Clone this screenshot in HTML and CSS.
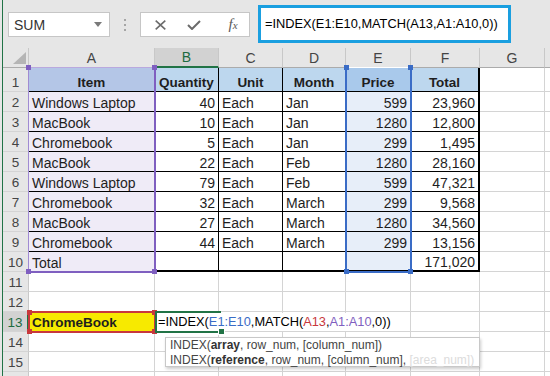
FILE: index.html
```html
<!DOCTYPE html>
<html lang="en">
<head>
  <meta charset="UTF-8">
  <title>INDEX MATCH</title>
  <link rel="stylesheet" href="styles.css">
</head>
<body>
<div class="window">
  <div class="toolbar">
    <div class="namebox"><span class="name">SUM</span><span class="caret"></span></div>
    <div class="grip"></div>
    <div class="fxbtns">
      <svg class="ico" width="11" height="10" viewBox="0 0 11 10"><path d="M0.7 0.6 L10.3 9.4 M10.3 0.6 L0.7 9.4" stroke="#6b6b6b" stroke-width="1.6" fill="none"/></svg>
      <svg class="ico" width="14" height="10" viewBox="0 0 14 10"><path d="M1 5 L5 9 L13 1" stroke="#6b6b6b" stroke-width="2" fill="none"/></svg>
      <span class="fx"><i>f</i><i class="sub">x</i></span>
    </div>
    <div class="formula">=INDEX(E1:E10,MATCH(A13,A1:A10,0))</div>
  </div>

  <div class="sheet">
    <div class="corner"></div>
    <div class="ch">A</div><div class="ch sel">B</div><div class="ch">C</div><div class="ch">D</div>
    <div class="ch">E</div><div class="ch">F</div><div class="ch">G</div><div class="ch"></div>

    <div class="rh">1</div>
    <div class="c t hd pa">Item</div><div class="c t hd">Quantity</div><div class="c t hd">Unit</div>
    <div class="c t hd">Month</div><div class="c t hd pe">Price</div><div class="c t hd f">Total</div>
    <div class="c"></div><div class="c"></div>

    <div class="rh">2</div>
    <div class="c t pa">Windows Laptop</div><div class="c t n">40</div><div class="c t">Each</div>
    <div class="c t">Jan</div><div class="c t n pe">599</div><div class="c t n f">23,960</div>
    <div class="c"></div><div class="c"></div>

    <div class="rh">3</div>
    <div class="c t pa">MacBook</div><div class="c t n">10</div><div class="c t">Each</div>
    <div class="c t">Jan</div><div class="c t n pe">1280</div><div class="c t n f">12,800</div>
    <div class="c"></div><div class="c"></div>

    <div class="rh">4</div>
    <div class="c t pa">Chromebook</div><div class="c t n">5</div><div class="c t">Each</div>
    <div class="c t">Jan</div><div class="c t n pe">299</div><div class="c t n f">1,495</div>
    <div class="c"></div><div class="c"></div>

    <div class="rh">5</div>
    <div class="c t pa">MacBook</div><div class="c t n">22</div><div class="c t">Each</div>
    <div class="c t">Feb</div><div class="c t n pe">1280</div><div class="c t n f">28,160</div>
    <div class="c"></div><div class="c"></div>

    <div class="rh">6</div>
    <div class="c t pa">Windows Laptop</div><div class="c t n">79</div><div class="c t">Each</div>
    <div class="c t">Feb</div><div class="c t n pe">599</div><div class="c t n f">47,321</div>
    <div class="c"></div><div class="c"></div>

    <div class="rh">7</div>
    <div class="c t pa">Chromebook</div><div class="c t n">32</div><div class="c t">Each</div>
    <div class="c t">March</div><div class="c t n pe">299</div><div class="c t n f">9,568</div>
    <div class="c"></div><div class="c"></div>

    <div class="rh">8</div>
    <div class="c t pa">MacBook</div><div class="c t n">27</div><div class="c t">Each</div>
    <div class="c t">March</div><div class="c t n pe">1280</div><div class="c t n f">34,560</div>
    <div class="c"></div><div class="c"></div>

    <div class="rh">9</div>
    <div class="c t pa">Chromebook</div><div class="c t n">44</div><div class="c t">Each</div>
    <div class="c t">March</div><div class="c t n pe">299</div><div class="c t n f">13,156</div>
    <div class="c"></div><div class="c"></div>

    <div class="rh">10</div>
    <div class="c t pa">Total</div><div class="c t end"></div><div class="c t end"></div>
    <div class="c t end"></div><div class="c t end pe"></div><div class="c t n f end">171,020</div>
    <div class="c"></div><div class="c"></div>

    <div class="rh">11</div>
    <div class="c"></div><div class="c"></div><div class="c"></div><div class="c"></div>
    <div class="c"></div><div class="c"></div><div class="c"></div><div class="c"></div>

    <div class="rh">12</div>
    <div class="c"></div><div class="c"></div><div class="c"></div><div class="c"></div>
    <div class="c"></div><div class="c"></div><div class="c"></div><div class="c"></div>

    <div class="rh sel">13</div>
    <div class="c hl">ChromeBook</div><div class="c"></div><div class="c"></div><div class="c"></div>
    <div class="c"></div><div class="c"></div><div class="c"></div><div class="c"></div>

    <div class="rh">14</div>
    <div class="c"></div><div class="c"></div><div class="c"></div><div class="c"></div>
    <div class="c"></div><div class="c"></div><div class="c"></div><div class="c"></div>

    <div class="rh">15</div>
    <div class="c"></div><div class="c"></div><div class="c"></div><div class="c"></div>
    <div class="c"></div><div class="c"></div><div class="c"></div><div class="c"></div>

    <div class="rh"></div>
    <div class="c"></div><div class="c"></div><div class="c"></div><div class="c"></div>
    <div class="c"></div><div class="c"></div><div class="c"></div><div class="c"></div>

    <!-- reference highlights drawn over the grid -->
    <div class="range ra"><span class="h tl"></span><span class="h tr"></span><span class="h bl"></span><span class="h br"></span></div>
    <div class="range re"><span class="h tl"></span><span class="h tr"></span><span class="h bl"></span><span class="h br"></span></div>
    <div class="range rr"><span class="h tl"></span><span class="h tr"></span><span class="h bl"></span><span class="h br"></span></div>
    <div class="edit">=INDEX(<span class="kb">E1:E10</span>,MATCH(<span class="kr">A13</span>,<span class="kp">A1:A10</span>,0))</div>
    <div class="range rg"><span class="h br"></span></div>

    <div class="tip">
      <div>INDEX(<b>array</b>, row_num, [column_num])</div>
      <div>INDEX(<b>reference</b>, row_num, [column_num], <span class="faded">[area_num])</span></div>
    </div>
  </div>
</div>
</body>
</html>
```

FILE: styles.css
```css
body {
  margin: 0;
  background-color: #e6e6e6;
  font-family: "Liberation Sans", Arial, sans-serif;
  overflow: hidden;
}

.window {
  margin-left: 2px;
  border-left: 1px solid #217346;
  height: 376px;
  overflow: hidden;
}

/* formula bar row */
.toolbar {
  display: flex;
  align-items: flex-start;
  height: 48px;
}

.namebox {
  margin: 12px 0 0 5px;
  width: 102px;
  height: 25px;
  box-sizing: border-box;
  background-color: #fff;
  border: 1px solid #c6c6c6;
  display: flex;
  align-items: center;
  justify-content: space-between;
  padding: 0 7px 0 5px;
}

.name {
  font-size: 14px;
  color: #333;
}

.caret {
  width: 0;
  height: 0;
  border-left: 4px solid transparent;
  border-right: 4px solid transparent;
  border-top: 5px solid #7a7a7a;
}

.grip {
  margin: 19px 0 0 14px;
  width: 2px;
  height: 12px;
  background: repeating-linear-gradient(#a5a5a5 0 2px, transparent 2px 5px);
}

.fxbtns {
  margin: 12px 0 0 14px;
  width: 110px;
  height: 25px;
  box-sizing: border-box;
  background-color: #fff;
  border: 1px solid #c6c6c6;
  display: grid;
  grid-template-columns: 38px 30px 42px;
  align-items: center;
  justify-items: center;
}

.fx {
  font-family: "Liberation Serif", serif;
  color: #5a5a5a;
  font-size: 15px;
  margin-left: 6px;
}

.fx .sub {
  font-size: 11px;
}

.formula {
  margin: 5px 0 0 8px;
  width: 253px;
  height: 38px;
  box-sizing: border-box;
  background-color: #fff;
  border: 3px solid #1a9fe0;
  padding-left: 4px;
  font-size: 12.8px;
  line-height: 31px;
  color: #000;
  white-space: nowrap;
}

/* worksheet grid */
.sheet {
  position: relative;
  display: grid;
  grid-template-columns: 26px 126px 64px 64px 63px 65px 69px 65px 1fr;
  grid-template-rows: 20px 24px repeat(15, 20px);
  background-color: #fff;
}

.corner,
.ch {
  background-color: #e6e6e6;
  border-right: 1px solid #c8c8c8;
  border-bottom: 1px solid #ababab;
}

.corner {
  position: relative;
}

.corner::after {
  content: "";
  position: absolute;
  right: 2px;
  bottom: 3px;
  border-left: 13px solid transparent;
  border-bottom: 12px solid #b5b5b5;
}

.ch {
  display: flex;
  align-items: center;
  justify-content: center;
  font-size: 14px;
  color: #444;
}

.ch.sel {
  background-color: #d2d2d2;
  border-bottom: 2px solid #217346;
  color: #1d6b3f;
}

.rh {
  background-color: #e6e6e6;
  border-right: 1px solid #c8c8c8;
  border-bottom: 1px solid #d4d4d4;
  display: flex;
  align-items: flex-end;
  justify-content: center;
  font-size: 13.5px;
  line-height: 16px;
  color: #444;
}

.rh.sel {
  background-color: #d2d2d2;
  border-right: 2px solid #217346;
  color: #1d6b3f;
}

.c {
  border-right: 1px solid #d4d4d4;
  border-bottom: 1px solid #d4d4d4;
  display: flex;
  align-items: flex-end;
  padding: 0 3px;
  font-size: 14px;
  line-height: 16px;
  color: #1e1e1e;
  white-space: nowrap;
  min-width: 0;
}

.t {
  border-color: #000;
}

.n {
  justify-content: flex-end;
}

.hd {
  background-color: #bdd7ee;
  font-weight: bold;
  font-size: 13.5px;
  justify-content: center;
}

.pa {
  background-color: #efebf7;
}

.hd.pa {
  background-color: #b4c6e7;
}

.pe {
  background-color: #e7eef9;
}

.hd.pe {
  background-color: #a9c9eb;
}

.f {
  border-right: 2px solid #000;
}

.end {
  border-bottom: 2px solid #000;
}

.hl {
  background-color: #f7ea00;
  font-weight: bold;
  font-size: 13.5px;
}

/* range outlines */
.range {
  position: absolute;
  box-sizing: border-box;
}

.h {
  position: absolute;
  width: 5px;
  height: 5px;
}

.tl { left: -3px; top: -3px; }
.tr { right: -3px; top: -3px; }
.bl { left: -3px; bottom: -3px; }
.br { right: -3px; bottom: -3px; }

.ra {
  left: 25px;
  top: 19px;
  width: 128px;
  height: 206px;
  border: 2px solid #7f5fc0;
  border-top: 1px solid #b9a9de;
  border-left: 1px solid #a08bd2;
}

.ra .h { background-color: #7f5fc0; }

.re {
  left: 342px;
  top: 19px;
  width: 67px;
  height: 206px;
  border: 2px solid #3a6cc6;
  border-top: 1px solid #ffffff;
}

.re .h { background-color: #3a6cc6; }

.rr {
  left: 25px;
  top: 263px;
  width: 128px;
  height: 22px;
  border: 2px solid #c8383d;
}

.rr .h { background-color: #c8383d; }

.rg {
  left: 152px;
  top: 263px;
  width: 66px;
  height: 22px;
  border: 2px solid #217346;
  border-right: none;
}

.rg .h {
  background-color: #217346;
  outline: 1px solid #fff;
}

.edit {
  position: absolute;
  left: 154px;
  top: 265px;
  width: 238px;
  height: 18px;
  background-color: #fff;
  padding-left: 1px;
  font-size: 12.8px;
  line-height: 18px;
  color: #000;
  white-space: nowrap;
}

.kb { color: #3a6cc6; }
.kr { color: #c8383d; }
.kp { color: #7f5fc0; }

.tip {
  position: absolute;
  left: 162px;
  top: 289px;
  width: 315px;
  height: 30px;
  box-sizing: border-box;
  background-color: #fff;
  border: 1px solid #c8c8c8;
  box-shadow: 1px 2px 3px rgba(0, 0, 0, 0.2);
  padding: 0 4px;
  font-size: 12px;
  line-height: 15px;
  color: #444;
  white-space: nowrap;
}

.tip b {
  color: #333;
}

.faded {
  color: #dcdcdc;
}
```
